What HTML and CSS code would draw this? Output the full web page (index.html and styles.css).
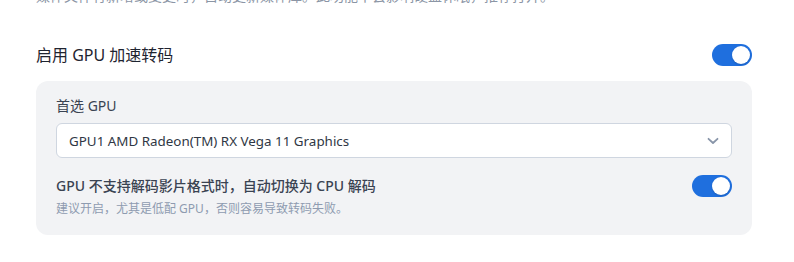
FILE: index.html
```html
<!DOCTYPE html>
<html lang="zh-CN">
<head>
<meta charset="utf-8">
<title>GPU 设置</title>
<link rel="stylesheet" href="styles.css">
</head>
<body>
<div class="page">
  <p class="prev-desc">媒体文件有新增或变更时，自动更新媒体库。此功能不会影响硬盘休眠，推荐打开。</p>

  <div class="setting-row">
    <span class="setting-title">启用 GPU 加速转码</span>
    <span class="toggle on"><span class="knob"></span></span>
  </div>

  <div class="panel">
    <div class="field-label">首选 GPU</div>
    <div class="select">
      <span class="select-value">GPU1 AMD Radeon(TM) RX Vega 11 Graphics</span>
      <svg class="chevron" width="12" height="8" viewBox="0 0 12 8" aria-hidden="true">
        <path d="M1.5 1.8 L6 6 L10.5 1.8" fill="none" stroke="#8895a9" stroke-width="1.8" stroke-linecap="round" stroke-linejoin="round"/>
      </svg>
    </div>

    <div class="sub-row">
      <div class="sub-text">
        <div class="sub-title">GPU 不支持解码影片格式时，自动切换为 CPU 解码</div>
        <div class="sub-hint">建议开启，尤其是低配 GPU，否则容易导致转码失败。</div>
      </div>
      <span class="toggle on"><span class="knob"></span></span>
    </div>
  </div>
</div>
</body>
</html>
```

FILE: styles.css
```css
html, body {
  margin: 0;
  padding: 0;
  background: #ffffff;
}

body {
  font-family: "Noto Sans", "Noto Sans CJK SC", sans-serif;
  overflow: hidden;
}

.page {
  padding: 0 42px 0 36px;
}

.prev-desc {
  margin: -14px 0 0 0;
  font-size: 14px;
  line-height: 20px;
  color: #8b95a5;
}

.setting-row {
  display: flex;
  align-items: center;
  justify-content: space-between;
  margin-top: 38px;
  height: 22px;
}

.setting-title {
  font-size: 16px;
  line-height: 22px;
  color: #1f2430;
}

.toggle {
  display: inline-flex;
  align-items: center;
  justify-content: flex-end;
  box-sizing: border-box;
  width: 40px;
  height: 22px;
  padding: 2px;
  border-radius: 11px;
  background: #d1d5db;
  flex-shrink: 0;
}

.toggle.on {
  background: #1f6fde;
}

.knob {
  width: 18px;
  height: 18px;
  border-radius: 50%;
  background: #ffffff;
  box-shadow: 0 1px 2px rgba(0, 0, 0, 0.15);
}

.panel {
  margin-top: 15px;
  background: #f2f3f5;
  border-radius: 12px;
  padding: 15px 20px 17px 20px;
}

.field-label {
  font-size: 14px;
  line-height: 20px;
  color: #3a4352;
}

.select {
  margin-top: 7px;
  box-sizing: border-box;
  height: 35px;
  display: flex;
  align-items: center;
  justify-content: space-between;
  background: #ffffff;
  border: 1px solid #cfd6e0;
  border-radius: 6px;
  padding: 0 12px 0 12px;
}

.select-value {
  font-size: 13.4px;
  color: #2f3744;
}

.chevron {
  display: block;
}

.sub-row {
  margin-top: 17px;
  display: flex;
  align-items: flex-start;
  justify-content: space-between;
}

.sub-title {
  font-size: 14px;
  line-height: 22px;
  font-weight: 500;
  color: #3a4352;
}

.sub-hint {
  margin-top: 3px;
  font-size: 12px;
  line-height: 18px;
  color: #8e9bb0;
}
```
